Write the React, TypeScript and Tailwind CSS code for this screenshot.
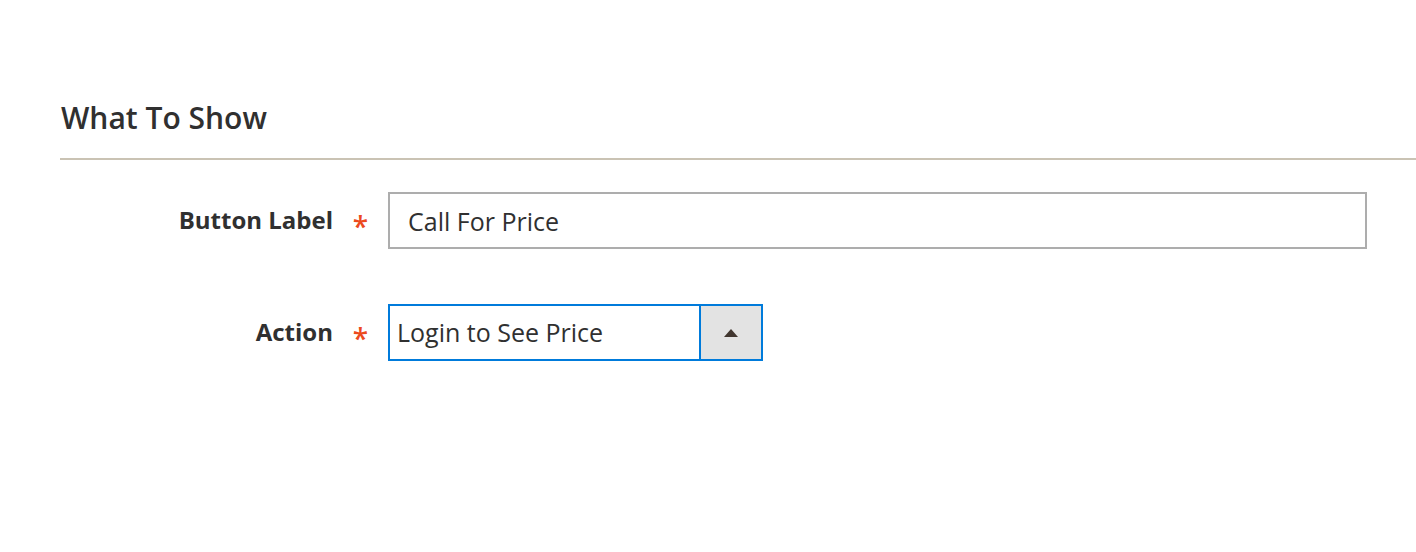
import React from "react";

export default function App() {
  return (
    <div
      className="w-[1416px] h-[552px] bg-white text-[#303030]"
      style={{ fontFamily: '"Open Sans", "Liberation Sans", sans-serif' }}
    >
      <div className="pl-[60px] pt-[98px]">
        <div className="border-b-2 border-[#cac3b4] pb-[20px] pl-px">
          <h2 className="text-[30px] leading-[40px] font-semibold text-[#303030]">What To Show</h2>
        </div>
      </div>
      <div className="pl-[60px] pt-[32px] flex flex-col gap-[55px]">
        <div className="flex items-center">
          <div className="w-[273px] text-right text-[24px] font-bold leading-[30px] -mt-[2px]">Button Label</div>
          <div className="w-[55px] flex justify-center pt-[10px] text-[28px] leading-[30px] text-[#ec4a1e] font-semibold">*</div>
          <input
            readOnly
            value="Call For Price"
            className="w-[979px] h-[57px] border-2 border-[#adadad] px-[18px] text-[25px] text-[#303030] outline-none"
            style={{ fontFamily: '"Open Sans", "Liberation Sans", sans-serif' }}
          />
        </div>
        <div className="flex items-center">
          <div className="w-[273px] text-right text-[24px] font-bold leading-[30px] -mt-[2px]">Action</div>
          <div className="w-[55px] flex justify-center pt-[10px] text-[28px] leading-[30px] text-[#ec4a1e] font-semibold">*</div>
          <div className="w-[375px] h-[57px] border-2 border-[#007bdb] flex">
            <div className="flex-1 flex items-center pl-[7px] text-[25px] text-[#303030]">Login to See Price</div>
            <div className="w-[62px] border-l-2 border-[#007bdb] bg-[#e3e3e3] flex items-center justify-center">
              <svg width="14" height="8" viewBox="0 0 14 8">
                <polygon points="0,8 7,0 14,8" fill="#41362f" />
              </svg>
            </div>
          </div>
        </div>
      </div>
    </div>
  );
}
